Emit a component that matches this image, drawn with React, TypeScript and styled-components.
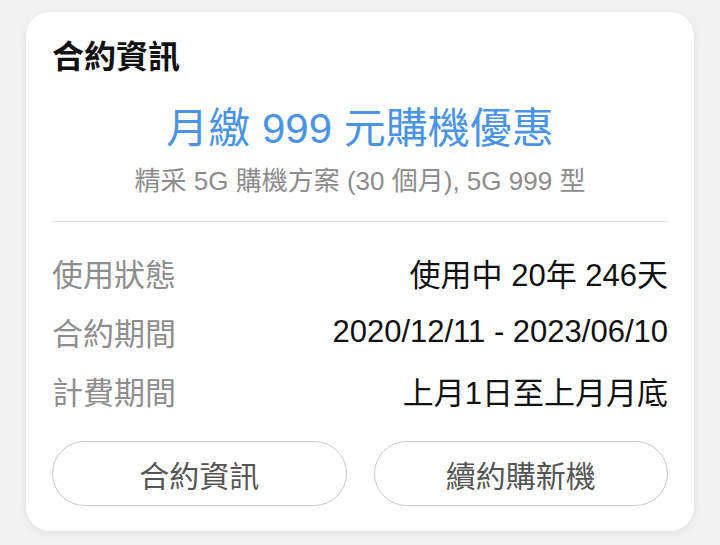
import { createGlobalStyle, styled } from "styled-components";

const GlobalStyle = createGlobalStyle`
  html, body {
    margin: 0;
    padding: 0;
    background: #f2f2f2;
    font-family: "Liberation Sans", "Noto Sans CJK TC", sans-serif;
  }
`;

const Page = styled.div`
  padding: 12px 26px 13px;
`;

const Card = styled.div`
  background: #fff;
  border-radius: 24px;
  padding: 24px 26px 25px;
  box-shadow: 0 2px 10px rgba(0, 0, 0, 0.08);
`;

const Title = styled.h2`
  margin: 0;
  font-size: 32px;
  line-height: 43px;
  font-weight: 700;
  color: #111;
`;

const Promo = styled.div`
  margin-top: 25px;
  text-align: center;
  font-size: 42px;
  line-height: 50px;
  color: #4a94e6;
`;

const PlanName = styled.div`
  margin-top: 10px;
  text-align: center;
  font-size: 26px;
  line-height: 34px;
  color: #8c8c8c;
`;

const Divider = styled.hr`
  margin: 23px 0 21px;
  border: none;
  border-top: 1px solid #dcdcdc;
`;

const Row = styled.div`
  display: flex;
  justify-content: space-between;
  align-items: center;
  height: 59px;
  font-size: 31px;
`;

const Label = styled.span`
  color: #8e8e8e;
`;

const Value = styled.span`
  color: #111;
`;

const Actions = styled.div`
  display: grid;
  grid-template-columns: 1fr 1fr;
  gap: 27px;
  margin-top: 21px;
`;

const Button = styled.button`
  height: 65px;
  border: 1.5px solid #c9c9c9;
  border-radius: 33px;
  background: #fff;
  font-family: inherit;
  font-size: 30px;
  color: #555;
`;

const rows = [
  { label: "使用狀態", value: "使用中 20年 246天" },
  { label: "合約期間", value: "2020/12/11 - 2023/06/10" },
  { label: "計費期間", value: "上月1日至上月月底" },
];

export default function App() {
  return (
    <Page>
      <GlobalStyle />
      <Card>
        <Title>合約資訊</Title>
        <Promo>月繳 999 元購機優惠</Promo>
        <PlanName>精采 5G 購機方案 (30 個月), 5G 999 型</PlanName>
        <Divider />
        {rows.map((r) => (
          <Row key={r.label}>
            <Label>{r.label}</Label>
            <Value>{r.value}</Value>
          </Row>
        ))}
        <Actions>
          <Button>合約資訊</Button>
          <Button>續約購新機</Button>
        </Actions>
      </Card>
    </Page>
  );
}
